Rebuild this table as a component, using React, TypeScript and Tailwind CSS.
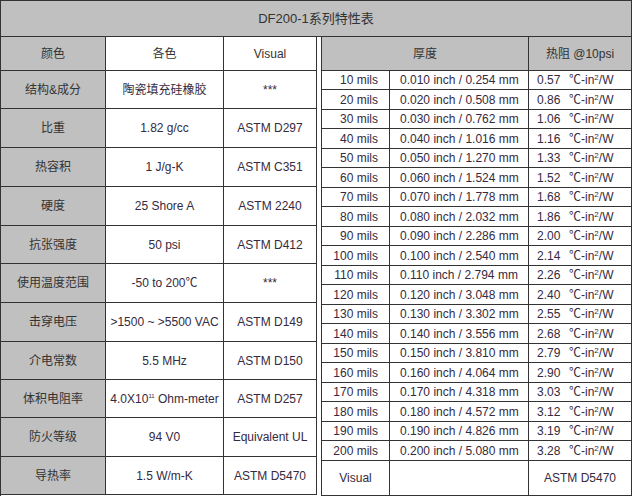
import React from "react";

const font = { fontFamily: '"Liberation Sans", Arial, "Noto Sans CJK SC", sans-serif' };

// left block: label / value / test method
const props = [
  { label: "结构&成分", value: "陶瓷填充硅橡胶", test: "***", h: "h-[38px]" },
  { label: "比重", value: "1.82 g/cc", test: "ASTM D297", h: "h-[39px]" },
  { label: "热容积", value: "1 J/g-K", test: "ASTM C351", h: "h-[39px]" },
  { label: "硬度", value: "25 Shore A", test: "ASTM 2240", h: "h-[39px]" },
  { label: "抗张强度", value: "50 psi", test: "ASTM D412", h: "h-[38px]" },
  { label: "使用温度范围", value: "-50 to 200℃", test: "***", h: "h-[39px]" },
  { label: "击穿电压", value: ">1500 ~ >5500 VAC", test: "ASTM D149", h: "h-[39px]" },
  { label: "介电常数", value: "5.5 MHz", test: "ASTM D150", h: "h-[38px]" },
  { label: "体积电阻率", value: "ohm", test: "ASTM D257", h: "h-[38px]" },
  { label: "防火等级", value: "94 V0", test: "Equivalent UL", h: "h-[39px]" },
  { label: "导热率", value: "1.5 W/m-K", test: "ASTM D5470", h: "h-[38px]" },
];

const mm = [
  "0.254", "0.508", "0.762", "1.016", "1.270", "1.524", "1.778", "2.032", "2.286", "2.540",
  "2.794", "3.048", "3.302", "3.556", "3.810", "4.064", "4.318", "4.572", "4.826", "5.080",
];
const res = [
  "0.57", "0.86", "1.06", "1.16", "1.33", "1.52", "1.68", "1.86", "2.00", "2.14",
  "2.26", "2.40", "2.55", "2.68", "2.79", "2.90", "3.03", "3.12", "3.19", "3.28",
];

const cell = "flex items-center justify-center border-r border-b border-[#333]";

export default function App() {
  return (
    <div className="w-[632px] h-[496px] bg-white text-[12px] text-[#333]" style={font}>
      {/* title */}
      <div className="h-[37px] border border-[#333] bg-[#c0c0c0] flex items-center justify-center text-[13px]">
        DF200-1系列特性表
      </div>

      <div className="flex">
        {/* left table */}
        <div className="w-[317px] border-l border-[#333] flex flex-col">
          <div className="flex h-[34px]">
            <div className={`${cell} w-[105px] bg-[#c0c0c0]`}>颜色</div>
            <div className={`${cell} w-[118px]`}>各色</div>
            <div className={`${cell} w-[93px]`}>Visual</div>
          </div>
          {props.map((p) => (
            <div key={p.label} className={`flex ${p.h}`}>
              <div className={`${cell} w-[105px] bg-[#c0c0c0]`}>{p.label}</div>
              <div className={`${cell} w-[118px] whitespace-nowrap text-[#352a40]`}>
                {p.value === "ohm" ? (
                  <span>
                    4.0X10<sup className="text-[6px] -top-[5px]">11</sup> Ohm-meter
                  </span>
                ) : (
                  p.value
                )}
              </div>
              <div className={`${cell} w-[93px] whitespace-nowrap text-[#352a40]`}>{p.test}</div>
            </div>
          ))}
        </div>

        <div className="w-[4px]" />

        {/* right table */}
        <div className="w-[311px] border-l border-[#333] flex flex-col">
          <div className="flex h-[34px]">
            <div className={`${cell} w-[207px] bg-[#c0c0c0]`}>厚度</div>
            <div className={`${cell} w-[103px] bg-[#c0c0c0]`}>热阻 @10psi</div>
          </div>
          {mm.map((m, i) => (
            <div key={m} className={`flex ${i % 2 === 0 ? "h-[19px]" : "h-[20px]"} text-[#352a40]`}>
              <div className="w-[68px] border-r border-b border-[#333] flex items-center justify-end pr-[11px]">
                {(i + 1) * 10} mils
              </div>
              <div className="w-[139px] border-r border-b border-[#333] flex items-center pl-[10px] whitespace-nowrap">
                0.{String((i + 1) * 10).padStart(3, "0")} inch / {m} mm
              </div>
              <div className="w-[103px] border-r border-b border-[#333] flex items-center pl-[8px] whitespace-nowrap">
                <span className="w-[32px]">{res[i]}</span>
                <span>
                  ℃-in<sup className="text-[8px]">2</sup>/W
                </span>
              </div>
            </div>
          ))}
          <div className="flex h-[35px] text-[#352a40]">
            <div className={`${cell} w-[68px]`}>Visual</div>
            <div className={`${cell} w-[139px]`} />
            <div className={`${cell} w-[103px]`}>ASTM D5470</div>
          </div>
        </div>
      </div>
    </div>
  );
}
